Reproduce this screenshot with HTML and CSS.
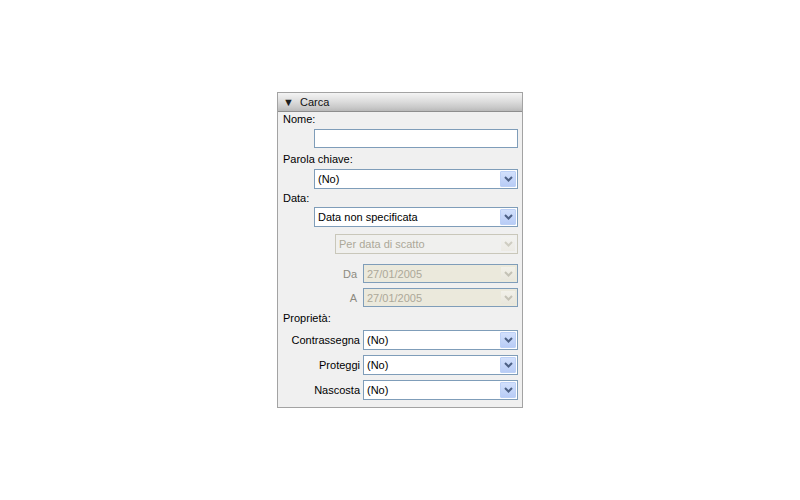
FILE: index.html
```html
<!DOCTYPE html>
<html lang="it">
<head>
    <meta charset="UTF-8">
    <title>Cerca</title>
    <link rel="stylesheet" href="styles.css">
</head>
<body>
    <div class="panel">
        <div class="panel-head">
            <span class="arrow">&#9660;</span>
            <span class="title">Carca</span>
        </div>

        <div class="panel-body">
            <div class="label">Nome:</div>
            <div class="field indent gap-b">
                <div class="textbox"></div>
            </div>

            <div class="label gap-a">Parola chiave:</div>
            <div class="field indent gap-b">
                <div class="combo">
                    <span class="combo-text">(No)</span>
                    <span class="combo-btn"><svg width="9" height="6" viewBox="0 0 9 6"><path d="M1 1 L4.5 4.5 L8 1" fill="none" stroke="#4d6185" stroke-width="2"/></svg></span>
                </div>
            </div>

            <div class="label gap-b">Data:</div>
            <div class="field indent gap-c">
                <div class="combo">
                    <span class="combo-text">Data non specificata</span>
                    <span class="combo-btn"><svg width="9" height="6" viewBox="0 0 9 6"><path d="M1 1 L4.5 4.5 L8 1" fill="none" stroke="#4d6185" stroke-width="2"/></svg></span>
                </div>
            </div>

            <div class="field indent-wide gap-d">
                <div class="combo off">
                    <span class="combo-text">Per data di scatto</span>
                    <span class="combo-btn"><svg width="9" height="6" viewBox="0 0 9 6"><path d="M1 1 L4.5 4.5 L8 1" fill="none" stroke="#cfcdc2" stroke-width="2"/></svg></span>
                </div>
            </div>

            <div class="row gap-e">
                <span class="row-label dim">Da</span>
                <div class="combo locked short">
                    <span class="combo-text">27/01/2005</span>
                    <span class="combo-btn"><svg width="9" height="6" viewBox="0 0 9 6"><path d="M1 1 L4.5 4.5 L8 1" fill="none" stroke="#c4c2b6" stroke-width="2"/></svg></span>
                </div>
            </div>

            <div class="row gap-f">
                <span class="row-label dim">A</span>
                <div class="combo locked short">
                    <span class="combo-text">27/01/2005</span>
                    <span class="combo-btn"><svg width="9" height="6" viewBox="0 0 9 6"><path d="M1 1 L4.5 4.5 L8 1" fill="none" stroke="#c4c2b6" stroke-width="2"/></svg></span>
                </div>
            </div>

            <div class="label gap-g">Proprietà:</div>

            <div class="row gap-g">
                <span class="row-label">Contrassegna</span>
                <div class="combo">
                    <span class="combo-text">(No)</span>
                    <span class="combo-btn"><svg width="9" height="6" viewBox="0 0 9 6"><path d="M1 1 L4.5 4.5 L8 1" fill="none" stroke="#4d6185" stroke-width="2"/></svg></span>
                </div>
            </div>

            <div class="row gap-f">
                <span class="row-label">Proteggi</span>
                <div class="combo">
                    <span class="combo-text">(No)</span>
                    <span class="combo-btn"><svg width="9" height="6" viewBox="0 0 9 6"><path d="M1 1 L4.5 4.5 L8 1" fill="none" stroke="#4d6185" stroke-width="2"/></svg></span>
                </div>
            </div>

            <div class="row gap-f">
                <span class="row-label">Nascosta</span>
                <div class="combo">
                    <span class="combo-text">(No)</span>
                    <span class="combo-btn"><svg width="9" height="6" viewBox="0 0 9 6"><path d="M1 1 L4.5 4.5 L8 1" fill="none" stroke="#4d6185" stroke-width="2"/></svg></span>
                </div>
            </div>
        </div>
    </div>
</body>
</html>
```

FILE: styles.css
```css
body {
    margin: 0;
    background-color: #ffffff;
    font-family: "Liberation Sans", Arial, sans-serif;
    font-size: 11px;
    color: #000;
}
.panel {
    width: 246px;
    height: 316px;
    box-sizing: border-box;
    margin: 92px 0 0 277px;
    border: 1px solid #a3a3a3;
    background-color: #f0f0f0;
}
.panel-head {
    height: 18px;
    border-bottom: 1px solid #8e8e8e;
    background: linear-gradient(#f4f4f4, #dedede 45%, #c9c9c9 80%, #b9b9b9);
    display: flex;
    align-items: center;
    padding-left: 5px;
}
.arrow {
    font-size: 11px;
    color: #1e1e1e;
    width: 17px;
}
.title {
    color: #111;
}
.panel-body {
    padding: 0 4px 0 5px;
}
.label {
    height: 15px;
    line-height: 15px;
}
.field {
    display: flex;
}
.indent {
    padding-left: 31px;
}
.indent-wide {
    padding-left: 52px;
}
.gap-a { margin-top: 4px; }
.gap-b { margin-top: 2px; }
.gap-c { margin-top: 1px; }
.gap-d { margin-top: 7px; }
.gap-e { margin-top: 10px; }
.gap-f { margin-top: 5px; }
.gap-g { margin-top: 4px; }
.textbox {
    flex: 1;
    height: 19px;
    box-sizing: border-box;
    border: 1px solid #7f9db9;
    background-color: #fff;
}
.combo {
    flex: 1;
    height: 20px;
    box-sizing: border-box;
    border: 1px solid #7f9db9;
    background-color: #fff;
    display: flex;
    align-items: center;
    padding: 1px;
}
.combo.short {
    height: 19px;
}
.combo-text {
    flex: 1;
    padding-left: 2px;
}
.combo-btn {
    width: 16px;
    align-self: stretch;
    box-sizing: border-box;
    border: 1px solid #bcd0f6;
    border-radius: 1px;
    background: linear-gradient(#d2e0fc, #b8ccf6);
    display: flex;
    align-items: center;
    justify-content: center;
}
.combo.off {
    border-color: #c9c7ba;
    background-color: #f0f0ee;
    color: #aca899;
}
.combo.off .combo-btn {
    border-color: #f0f0f0;
    background: linear-gradient(#f2f2ef, #eceae4);
}
.combo.locked {
    background-color: #ebe9dc;
    color: #aca899;
}
.combo.locked .combo-btn {
    border-color: #ebe9dc;
    background: linear-gradient(#f2f1ea, #e8e6dc);
}
.row {
    display: flex;
    align-items: center;
}
.row-label {
    width: 77px;
    text-align: right;
    padding-right: 3px;
}
.row-label.dim {
    width: 74px;
    padding-right: 6px;
    color: #8c8a80;
}
```
